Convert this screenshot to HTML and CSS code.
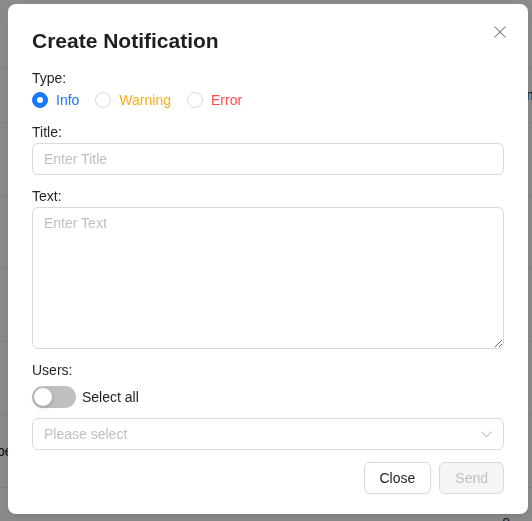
FILE: index.html
```html
<!DOCTYPE html>
<html lang="en">
<head>
<meta charset="utf-8">
<title>Create Notification</title>
<link rel="stylesheet" href="styles.css">
</head>
<body>
  <div class="page">
    <div class="row row-head"></div>
    <div class="row"><span class="cell-right">m</span></div>
    <div class="row"></div>
    <div class="row"></div>
    <div class="row"></div>
    <div class="row"></div>
    <div class="row"><span class="cell-left">be</span></div>
    <div class="row"><span class="cell-bottom">8</span></div>
  </div>
  <div class="mask"></div>
  <div class="modal">
    <button class="modal-close" aria-label="Close">
      <svg width="12" height="12" viewBox="0 0 12 12"><path d="M0.6 0.6 L11.4 11.4 M11.4 0.6 L0.6 11.4" stroke="#8c8c8c" stroke-width="1.3" fill="none"/></svg>
    </button>
    <h2 class="modal-title">Create Notification</h2>

    <div class="label">Type:</div>
    <div class="radios">
      <label class="radio radio-info"><span class="radio-dot checked"></span><span class="radio-text">Info</span></label>
      <label class="radio radio-warning"><span class="radio-dot"></span><span class="radio-text">Warning</span></label>
      <label class="radio radio-error"><span class="radio-dot"></span><span class="radio-text">Error</span></label>
    </div>

    <div class="label">Title:</div>
    <input class="input" type="text" placeholder="Enter Title">

    <div class="label">Text:</div>
    <textarea class="textarea" placeholder="Enter Text"></textarea>

    <div class="label">Users:</div>
    <div class="toggle-row">
      <span class="switch"><span class="switch-knob"></span></span>
      <span class="toggle-text">Select all</span>
    </div>

    <div class="select">
      <span class="select-placeholder">Please select</span>
      <svg class="select-arrow" width="11" height="7" viewBox="0 0 11 7"><path d="M0.5 0.7 L5.5 5.8 L10.5 0.7" stroke="#bfbfbf" stroke-width="1.1" fill="none"/></svg>
    </div>

    <div class="footer">
      <button class="btn">Close</button>
      <button class="btn btn-disabled" disabled>Send</button>
    </div>
  </div>
</body>
</html>
```

FILE: styles.css
```css
* { box-sizing: border-box; }

html, body {
  margin: 0;
  padding: 0;
  height: 100%;
  overflow: hidden;
}

body {
  background: #ffffff;
  font-family: "Liberation Sans", Arial, sans-serif;
  font-size: 14px;
  color: #1f1f1f;
}

.page {
  display: flex;
  flex-direction: column;
  height: 100vh;
  overflow: hidden;
}

.row {
  flex: none;
  height: 73px;
  border-bottom: 1px solid #ebebeb;
  display: flex;
  align-items: center;
  justify-content: space-between;
  font-size: 14px;
  color: #1f1f1f;
}

.row-head {
  height: 68px;
}

.row:nth-child(2) { height: 55px; }

.row:last-child {
  height: 34px;
  border-bottom: 0;
  align-items: flex-end;
}

.cell-left { margin-left: -3px; }
.cell-right { margin-left: auto; margin-right: -6px; }
.cell-bottom { margin-left: auto; margin-right: 22px; line-height: 1; margin-bottom: -8px; }

.mask {
  position: fixed;
  inset: 0;
  background: rgba(0, 0, 0, 0.45);
}

.modal {
  position: absolute;
  left: 8px;
  top: 4px;
  width: 520px;
  background: #ffffff;
  border-radius: 8px;
  padding: 24px 24px 20px;
  box-shadow: 0 6px 16px rgba(0, 0, 0, 0.08), 0 3px 6px -4px rgba(0, 0, 0, 0.12);
}

.modal-close {
  position: absolute;
  top: 22px;
  right: 22px;
  width: 12px;
  height: 12px;
  padding: 0;
  border: 0;
  background: none;
  display: block;
}

.modal-close svg { display: block; }

.modal-title {
  margin: 0 0 14px;
  font-size: 21px;
  line-height: 25px;
  font-weight: 700;
  color: #1f1f1f;
}

.label {
  line-height: 22px;
  color: #262626;
}

.radios {
  display: flex;
  height: 22px;
  align-items: center;
  margin-bottom: 10px;
}

.radio {
  display: flex;
  align-items: center;
  margin-right: 8px;
}

.radio-dot {
  width: 16px;
  height: 16px;
  border-radius: 50%;
  border: 1px solid #d9d9d9;
  background: #fff;
  display: flex;
  align-items: center;
  justify-content: center;
}

.radio-dot.checked {
  background: #1677ff;
  border-color: #1677ff;
}

.radio-dot.checked::after {
  content: "";
  width: 6px;
  height: 6px;
  border-radius: 50%;
  background: #fff;
}

.radio-text {
  padding: 0 8px;
  line-height: 22px;
}

.radio-info .radio-text { color: #1677ff; }
.radio-warning .radio-text { color: #faad14; }
.radio-error .radio-text { color: #ff4d4f; }

.input,
.textarea,
.select {
  display: block;
  width: 100%;
  border: 1px solid #d9d9d9;
  border-radius: 6px;
  background: #fff;
  font-family: inherit;
  font-size: 14px;
  line-height: 22px;
  color: #1f1f1f;
  padding: 4px 11px;
  margin: 0 0 10px;
  outline: none;
}

.input { height: 32px; }

.textarea {
  height: 142px;
  resize: vertical;
}

.input::placeholder,
.textarea::placeholder {
  color: #bfbfbf;
}

.toggle-row {
  display: flex;
  align-items: center;
  margin: 5px 0 10px;
  height: 22px;
}

.switch {
  position: relative;
  width: 44px;
  height: 22px;
  border-radius: 11px;
  background: #bfbfbf;
}

.switch-knob {
  position: absolute;
  left: 2px;
  top: 2px;
  width: 18px;
  height: 18px;
  border-radius: 50%;
  background: #fff;
  box-shadow: 0 2px 4px rgba(0, 35, 11, 0.2);
}

.toggle-text {
  margin-left: 6px;
  line-height: 22px;
  color: #1f1f1f;
}

.select {
  height: 32px;
  display: flex;
  align-items: center;
  justify-content: space-between;
  margin-bottom: 12px;
}

.select-placeholder { color: #bfbfbf; }

.select-arrow {
  display: block;
  margin-right: 0;
}

.footer {
  display: flex;
  justify-content: flex-end;
  gap: 8px;
}

.btn {
  height: 32px;
  padding: 0 15px;
  border: 1px solid #d9d9d9;
  border-radius: 6px;
  background: #fff;
  font-family: inherit;
  font-size: 14px;
  color: #1f1f1f;
  box-shadow: 0 2px 0 rgba(0, 0, 0, 0.02);
}

.btn-disabled {
  background: #f5f5f5;
  color: #bfbfbf;
  box-shadow: none;
}
```
